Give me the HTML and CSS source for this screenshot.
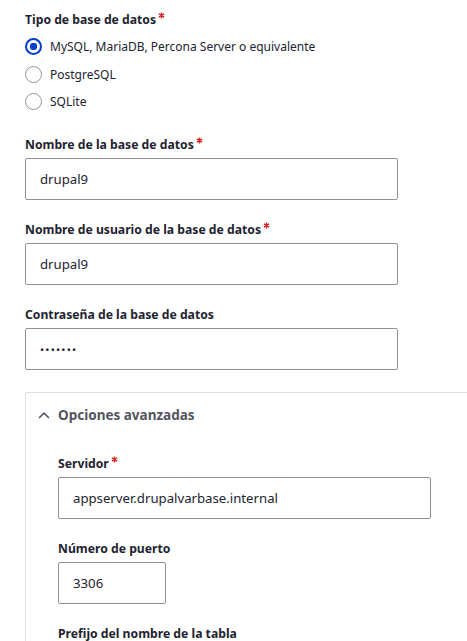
FILE: index.html
```html
<!DOCTYPE html>
<html lang="es">
<head>
<meta charset="utf-8">
<title>Configuración de la base de datos</title>
<link rel="stylesheet" href="styles.css">
</head>
<body>
<form class="form">
  <div class="radios">
    <div class="label">Tipo de base de datos<svg class="req" viewBox="0 0 8 8" width="7" height="7"><path d="M4 0.5V7.5M1 2.25L7 5.75M7 2.25L1 5.75"/></svg></div>
    <div class="radio-list">
      <label class="radio"><input type="radio" name="driver" checked><span>MySQL, MariaDB, Percona Server o equivalente</span></label>
      <label class="radio"><input type="radio" name="driver"><span>PostgreSQL</span></label>
      <label class="radio"><input type="radio" name="driver"><span>SQLite</span></label>
    </div>
  </div>

  <div class="item">
    <label class="label" for="db">Nombre de la base de datos<svg class="req" viewBox="0 0 8 8" width="7" height="7"><path d="M4 0.5V7.5M1 2.25L7 5.75M7 2.25L1 5.75"/></svg></label>
    <input class="input" id="db" type="text" value="drupal9">
  </div>

  <div class="item">
    <label class="label" for="user">Nombre de usuario de la base de datos<svg class="req" viewBox="0 0 8 8" width="7" height="7"><path d="M4 0.5V7.5M1 2.25L7 5.75M7 2.25L1 5.75"/></svg></label>
    <input class="input" id="user" type="text" value="drupal9">
  </div>

  <div class="item">
    <label class="label" for="pass">Contraseña de la base de datos</label>
    <input class="input password" id="pass" type="password" value="drupal9">
  </div>

  <details class="details" open>
    <summary class="summary"><svg class="chevron" viewBox="0 0 12 7" width="12" height="7"><path d="M1 6L6 1.2L11 6"/></svg>Opciones avanzadas</summary>
    <div class="details-body">
      <div class="item first">
        <label class="label" for="host">Servidor<svg class="req" viewBox="0 0 8 8" width="7" height="7"><path d="M4 0.5V7.5M1 2.25L7 5.75M7 2.25L1 5.75"/></svg></label>
        <input class="input" id="host" type="text" value="appserver.drupalvarbase.internal">
      </div>
      <div class="item">
        <label class="label" for="port">Número de puerto</label>
        <input class="input port" id="port" type="text" value="3306">
      </div>
      <div class="item">
        <label class="label" for="prefix">Prefijo del nombre de la tabla</label>
        <input class="input" id="prefix" type="text" value="">
      </div>
    </div>
  </details>
</form>
</body>
</html>
```

FILE: styles.css
```css
html, body {
  margin: 0;
  padding: 0;
  background: #fff;
  overflow: hidden;
}

body {
  font-family: "Noto Sans", "Open Sans", sans-serif;
  color: #222330;
}

.form {
  padding: 11px 0 0 25px;
}

.label {
  display: block;
  font-size: 12.2px;
  font-weight: 700;
  line-height: 18px;
  margin-bottom: 4px;
  color: #222330;
}

.req {
  display: inline-block;
  vertical-align: 5px;
  margin-left: 2px;
  fill: none;
  stroke: #dc2323;
  stroke-width: 1.6;
}

.radio-list {
  display: flex;
  flex-direction: column;
}

.radio {
  display: flex;
  align-items: center;
  gap: 8px;
  height: 27.5px;
  font-size: 12px;
  color: #222330;
}

.radio input {
  appearance: none;
  -webkit-appearance: none;
  margin: 0;
  width: 17px;
  height: 17px;
  box-sizing: border-box;
  border: 1px solid #8e929c;
  border-radius: 50%;
  background: #fff;
  flex: none;
}

.radio input:checked {
  border: 2.5px solid #003ecc;
  background: radial-gradient(circle, #003ecc 0, #003ecc 3.4px, #fff 4px);
}

.item {
  margin-top: 21px;
}

.radios + .item {
  margin-top: 20.5px;
}

.input {
  display: block;
  box-sizing: border-box;
  width: 373px;
  height: 42px;
  margin: 0;
  padding: 0 14px;
  border: 1px solid #8e929c;
  border-radius: 2px;
  font-family: "Noto Sans", "Open Sans", sans-serif;
  font-size: 13.2px;
  color: #222330;
  background: #fff;
  outline: none;
}

.password {
  font-size: 11px;
  letter-spacing: 1.2px;
}

.port {
  width: 108px;
}

.details {
  margin-top: 22px;
  border: 1px solid #dedfe4;
  border-right: none;
  border-radius: 2px 0 0 2px;
}

.summary {
  display: flex;
  align-items: center;
  list-style: none;
  padding: 12px 0 12px 12px;
  font-size: 13.5px;
  font-weight: 700;
  line-height: 20px;
  color: #545560;
}

.summary::-webkit-details-marker {
  display: none;
}

.chevron {
  fill: none;
  stroke: #545560;
  stroke-width: 1.6;
  margin-right: 8px;
}

.details-body {
  padding: 18px 0 20px 32px;
}

.details-body .item.first {
  margin-top: 0;
}
```
